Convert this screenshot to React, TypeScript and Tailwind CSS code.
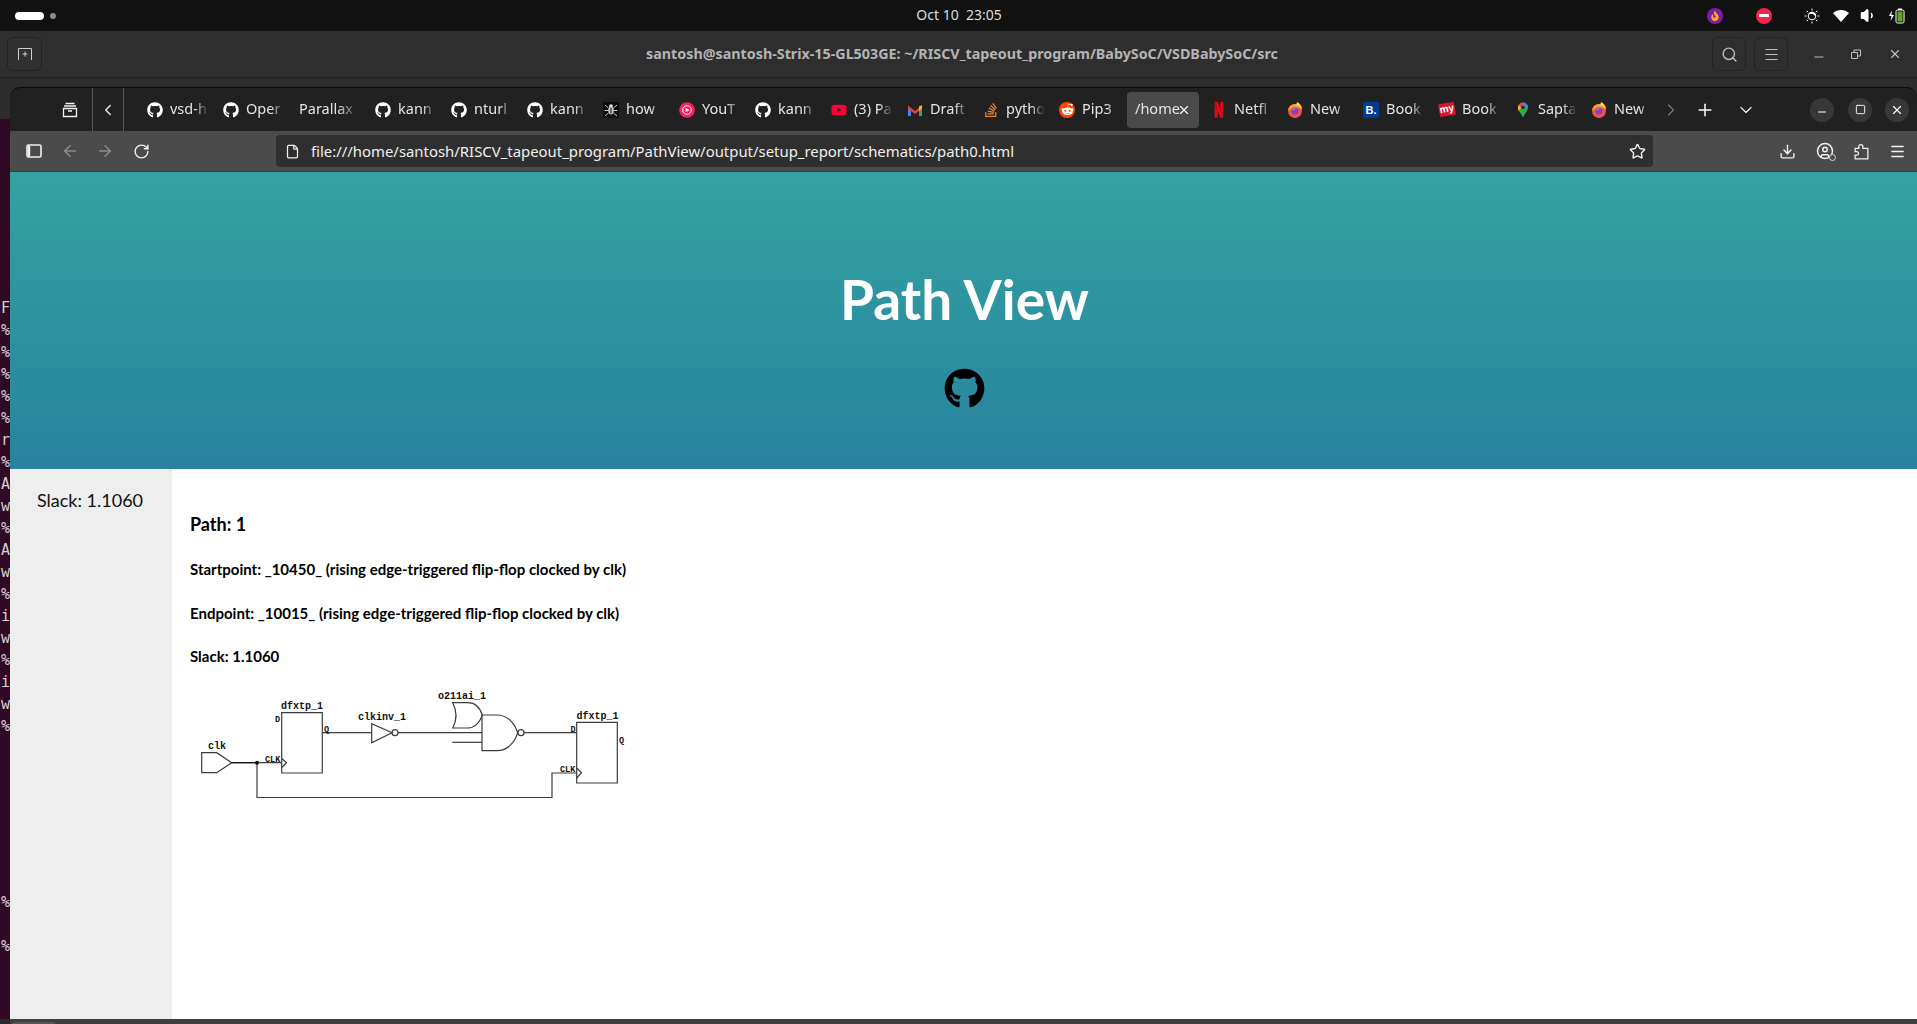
import { ArrowLeft, ArrowRight, ChevronDown, ChevronLeft, ChevronRight, CircleUser, Download, File, Menu, Minus, Plus, RotateCw, Search, Square, Star, Volume1, X } from "lucide-react";
import type { ReactNode } from "react";
import { FaFire, FaGithub, FaRedditAlien, FaStackOverflow, FaYoutube } from "react-icons/fa";
import { SiNetflix } from "react-icons/si";

const uiFont = "font-['Noto_Sans',sans-serif]";

const Firefox = () => (
  <svg viewBox="0 0 16 16" className="w-4 h-4 shrink-0">
    <circle cx="8" cy="9" r="7" fill="#f4523f" />
    <path d="M1 9a7 7 0 0 1 7-7c3.500 0 6 2.500 7 6-2-3-9-4-14 1z" fill="#ff9a2e" />
    <path d="M8.500 3c1-1 1.500-2 1.500-3 3 1.500 5 4 5 7.500C13.500 5 11 3.500 8.500 3z" fill="#ffd33d" />
    <circle cx="8" cy="9" r="3.400" fill="#7a3fd1" />
    <path d="M5 8c1-1.500 3-2 5-1.200-1.500 0-2.500.6-3 1.400z" fill="#ff9a2e" />
  </svg>
);

const Gmail = () => (
  <svg viewBox="0 0 16 16" className="w-4 h-4 shrink-0">
    <path d="M1 3.500v10.500h3V7z" fill="#4285f4" />
    <path d="M15 3.500v10.500h-3V7z" fill="#34a853" />
    <path d="M1 3.500l7 5.500 7-5.500v3L8 12 1 6.500z" fill="#ea4335" />
    <path d="M12 4.500l3-1.500v3.500L12 9z" fill="#fbbc04" />
  </svg>
);

const MapsPin = () => (
  <svg viewBox="0 0 16 16" className="w-4 h-4 shrink-0">
    <path d="M8 15.500C6 11 3 9 3 5.500a5 5 0 0 1 10 0C13 9 10 11 8 15.500z" fill="#34a853" />
    <path d="M3.600 3.200A5 5 0 0 1 8 .5v3a2 2 0 0 0-2 2z" fill="#ea4335" />
    <path d="M8 .5a5 5 0 0 1 5 5h-3a2 2 0 0 0-2-2z" fill="#4285f4" />
    <path d="M3.600 3.200L6 5.500 3.600 9C3.200 8 3 6.800 3 5.500c0-.8.2-1.600.6-2.300z" fill="#fbbc04" />
    <circle cx="8" cy="5.500" r="1.800" fill="#26282c" />
  </svg>
);

const YoutubeMusic = () => (
  <svg viewBox="0 0 16 16" className="w-4 h-4 shrink-0">
    <circle cx="8" cy="8" r="7.800" fill="#ff1f5f" />
    <circle cx="8" cy="8" r="4.300" fill="none" stroke="#fff" strokeWidth="1" />
    <path d="M6.700 5.900L10.400 8l-3.700 2.100z" fill="#fff" />
  </svg>
);

const HowIcon = () => (
  <svg viewBox="0 0 16 16" className="w-4 h-4 shrink-0">
    <rect width="16" height="16" fill="#0c0c0c" />
    <ellipse cx="8" cy="8.500" rx="2.800" ry="4" fill="#c8c8c8" />
    <circle cx="8" cy="4" r="1.800" fill="#e8e8e8" />
    <path d="M2 3l3.500 3M14 3l-3.500 3M1.500 8.500h4M14.500 8.500h-4M2 14l3.500-3M14 14l-3.500-3" stroke="#c8c8c8" strokeWidth="1" />
    <path d="M8 5.500v6" stroke="#0c0c0c" strokeWidth="1" />
  </svg>
);

const RedditIcon = () => (
  <span className="w-4 h-4 shrink-0 rounded-full bg-[#ff4500] flex items-center justify-center">
    <FaRedditAlien className="w-[13px] h-[13px] text-white" />
  </span>
);

const BookingIcon = () => (
  <span className="w-4 h-4 shrink-0 rounded-[2px] bg-[#003b95] text-white text-[11px] leading-4 font-bold text-center font-['Liberation_Sans',sans-serif]">B.</span>
);

const MyShowIcon = () => (
  <span className="w-4 h-[13px] shrink-0 rounded-[1px] bg-[#d6182d] text-white text-[10px] leading-[12px] font-bold text-center -rotate-[10deg] font-['Liberation_Sans',sans-serif]">my</span>
);

const gh = <FaGithub className="w-4 h-4 shrink-0 text-white" />;

const tabs: { title: string; icon?: ReactNode; active?: boolean }[] = [
  { title: "vsd-h", icon: gh },
  { title: "Oper", icon: gh },
  { title: "Parallax" },
  { title: "kann", icon: gh },
  { title: "nturl", icon: gh },
  { title: "kann", icon: gh },
  { title: "how", icon: <HowIcon /> },
  { title: "YouT", icon: <YoutubeMusic /> },
  { title: "kann", icon: gh },
  { title: "(3) Pa", icon: <FaYoutube className="w-4 h-4 shrink-0 text-[#ff0033]" /> },
  { title: "Draft", icon: <Gmail /> },
  { title: "pytho", icon: <FaStackOverflow className="w-4 h-4 shrink-0 text-[#f48024]" /> },
  { title: "Pip3", icon: <RedditIcon /> },
  { title: "/home", active: true },
  { title: "Netfl", icon: <SiNetflix className="w-4 h-4 shrink-0 text-[#e50914]" /> },
  { title: "New", icon: <Firefox /> },
  { title: "Book", icon: <BookingIcon /> },
  { title: "Book", icon: <MyShowIcon /> },
  { title: "Sapta", icon: <MapsPin /> },
  { title: "New", icon: <Firefox /> },
];

const terminalRows: Record<number, string> = {
  0: "F", 1: "%", 2: "%", 3: "%", 4: "%", 5: "%", 6: "r", 7: "%", 8: "A", 9: "w",
  10: "%", 11: "A", 12: "w", 13: "%", 14: "i", 15: "w", 16: "%", 17: "i", 18: "w", 19: "%",
  27: "%", 29: "%",
};

const Tab = ({ title, icon, active }: { title: string; icon?: ReactNode; active?: boolean }) => (
  <div className={`w-[72px] h-[36px] mr-[4px] shrink-0 rounded-[4px] pl-2 flex items-center gap-[7px] relative ${active ? "bg-[#4a4a4a]" : ""}`}>
    {icon}
    <span className={`text-[14.500px] text-[#e4e4e4] whitespace-nowrap overflow-hidden flex-1 pb-[2px] ${active ? "pr-[14px] [mask-image:linear-gradient(to_right,black_75%,transparent)]" : "pr-[4px] [mask-image:linear-gradient(to_right,black_60%,transparent_95%)]"}`}>{title}</span>
    {active && <X size={14} strokeWidth={2} className="absolute right-[8px] text-white" />}
  </div>
);

const TopBar = () => (
  <div className={`h-[31px] bg-[#111111] flex items-center shrink-0 ${uiFont}`}>
    <div className="flex-1 flex items-center">
      <div className="ml-[15px] w-[29px] h-[8px] rounded-full bg-white" />
      <div className="ml-[6px] w-[6px] h-[6px] rounded-full bg-[#8a8a8a]" />
    </div>
    <div className="ml-[12px] pb-[3px] text-[14px] text-[#dddddd] whitespace-pre">Oct 10  23:05</div>
    <div className="flex-1 flex items-center justify-end text-white pr-[11px]">
      <span className="w-4 h-[16px] rounded-full bg-[#7b1fa2] flex items-center justify-center mr-[33px]">
        <FaFire className="w-[10px] h-[10px] text-[#ffa62e]" />
      </span>
      <span className="w-[16px] h-[16px] rounded-full bg-[#f4254a] flex items-center justify-center mr-[32px]">
        <span className="w-[10px] h-[2.500px] bg-white" />
      </span>
      <svg viewBox="0 0 16 16" className="w-[16px] h-[16px] mr-[13px]" fill="none" stroke="#fff" strokeWidth="1">
        <circle cx="8" cy="8" r="3.800" />
        <path d="M5.300 5.300a3.800 3.800 0 0 1 6.400 2.700 6 6 0 0 0-6.400-2.700z" fill="#fff" />
        <path d="M8 .5v2M8 13.500v2M.5 8h2M13.500 8h2M2.700 2.700l1.400 1.400M11.900 11.900l1.400 1.400M2.700 13.300l1.400-1.400M11.900 4.100l1.400-1.400" />
      </svg>
      <svg viewBox="0 0 16 16" className="w-4 h-4 mr-[11px]"><path d="M0 5c4.500-4 11.500-4 16 0L8 14z" fill="#fff" /></svg>
      <Volume1 size={17} fill="#fff" className="mr-[11px]" />
      <svg viewBox="0 0 18 18" className="w-[18px] h-[18px]">
        <path d="M4 3.500L1 9h2.500L2.500 14 6 8H3.500z" fill="#fff" />
        <rect x="8" y="3" width="8" height="13" rx="1.500" fill="none" stroke="#fff" />
        <rect x="9.500" y="4.500" width="5" height="10" fill="#5fa61c" />
        <rect x="10" y="1.500" width="4" height="1.500" fill="#fff" />
      </svg>
    </div>
  </div>
);

const TitleBar = () => (
  <div className={`h-[47px] bg-[#2e2e2e] border-b border-[#1e1e1e] flex items-center shrink-0 ${uiFont}`}>
    <div className="flex-1 pl-[7px]">
      <div className="w-[35px] h-[34px] rounded-[6px] border border-[#222222] bg-[#303030] flex items-center justify-center">
        <svg viewBox="0 0 16 16" className="w-4 h-4" fill="none" stroke="#d0d0d0" strokeWidth="1"><path d="M1.500 14V2.500h13V14M8 5.500v5M5.500 8h5" /></svg>
      </div>
    </div>
    <div className="text-[14.300px] font-bold text-[#b4b4b4] whitespace-nowrap">santosh@santosh-Strix-15-GL503GE: ~/RISCV_tapeout_program/BabySoC/VSDBabySoC/src</div>
    <div className="flex-1 flex items-center justify-end">
      <div className="w-[34px] h-[34px] rounded-[6px] border border-[#222222] flex items-center justify-center mr-[8px]"><Search size={17} className="text-[#bdbdbd]" /></div>
      <div className="w-[34px] h-[34px] rounded-[6px] border border-[#222222] flex items-center justify-center mr-[24px]"><Menu size={17} strokeWidth={1.500} className="text-[#bdbdbd]" /></div>
      <Minus size={14} className="text-[#bdbdbd] mr-[24px] mt-[6px]" />
      <svg viewBox="0 0 12 12" className="w-3 h-3 mr-[26px]" fill="none" stroke="#bdbdbd"><path d="M1.500 4.500h6v6h-6zM4 4.500V2h6.500v6H7.500" /></svg>
      <X size={14} className="text-[#bdbdbd] mr-[15px]" />
    </div>
  </div>
);

const TabBar = () => (
  <div className={`h-[44px] bg-[#212121] border-t border-[#0b0b0b] rounded-t-[10px] flex items-center shrink-0 ${uiFont}`}>
    <svg viewBox="0 0 16 16" className="w-4 h-4 ml-[52px] mr-[14px] shrink-0" fill="none" stroke="#f0f0f0" strokeWidth="1.300"><path d="M3.500 1.500h9M2 4h12M1.500 6.500h13v8h-13zM6 9h4" /></svg>
    <div className="w-px h-[44px] bg-[#555555]" />
    <ChevronLeft size={18} className="text-[#e8e8e8] mx-[6px] shrink-0" />
    <div className="w-px h-[44px] bg-[#555555] mr-[15px]" />
    <div className="flex items-center">
      {tabs.map((tab, i) => <Tab key={i} {...tab} />)}
    </div>
    <ChevronRight size={20} strokeWidth={1.500} className="text-[#777777] ml-[2px] shrink-0" />
    <Plus size={20} strokeWidth={1.800} className="text-white ml-[14px] shrink-0" />
    <ChevronDown size={20} strokeWidth={1.500} className="text-[#e8e8e8] ml-[21px] shrink-0" />
    <div className="w-6 h-6 rounded-full bg-[#383838] flex items-center justify-center ml-[54px] shrink-0"><Minus size={12} className="text-white mt-1" /></div>
    <div className="w-6 h-6 rounded-full bg-[#383838] flex items-center justify-center ml-[14px] shrink-0"><Square size={11} className="text-white" /></div>
    <div className="w-6 h-6 rounded-full bg-[#383838] flex items-center justify-center ml-[13px] shrink-0"><X size={14} className="text-white" /></div>
  </div>
);

const Toolbar = () => (
  <div className={`h-[41px] bg-[#4b4b4b] border-b border-[#3a3a3a] flex items-center shrink-0 ${uiFont}`}>
    <svg viewBox="0 0 16 16" className="w-4 h-4 ml-[16px] shrink-0" fill="none" stroke="#f0f0f0" strokeWidth="1.600"><rect x="1" y="2" width="14" height="12" rx="1.500" /><path d="M3 3v10" strokeWidth="2.400" /></svg>
    <ArrowLeft size={18} className="text-[#8d8d8d] ml-[19px] shrink-0" />
    <ArrowRight size={18} className="text-[#8d8d8d] ml-[17px] shrink-0" />
    <RotateCw size={17} className="text-[#f0f0f0] ml-[19px] shrink-0" />
    <div className="w-[1377px] h-[32px] rounded-[4px] bg-[#2f2f2f] ml-[126px] flex items-center pl-[9px] shrink-0">
      <File size={15} className="text-[#f0f0f0] shrink-0" />
      <span className="ml-[11px] text-[14.900px] text-[#f0f0f0] whitespace-nowrap">file:///home/santosh/RISCV_tapeout_program/PathView/output/setup_report/schematics/path0.html</span>
      <Star size={17} className="text-[#f0f0f0] ml-auto mr-[7px] shrink-0" />
    </div>
    <Download size={17} className="text-[#f0f0f0] ml-[126px] shrink-0" />
    <div className="relative ml-[20px] shrink-0">
      <CircleUser size={18} className="text-[#f0f0f0]" />
      <span className="absolute -right-[2px] -bottom-[1px] w-[7px] h-[7px] rounded-full border border-[#d0d0d0] bg-[#4b4b4b]" />
    </div>
    <svg viewBox="0 0 16 16" className="w-[17px] h-[17px] ml-[19px] shrink-0" fill="none" stroke="#f0f0f0" strokeWidth="1.200"><path d="M2 15v-3.500h1.500a1.700 1.700 0 0 0 0-3.400H2V5h3.500V3.500a1.900 1.900 0 0 1 3.800 0V5H14v10z" /></svg>
    <Menu size={17} className="text-[#f0f0f0] ml-[19px] shrink-0" />
  </div>
);

const Schematic = () => (
  <svg viewBox="10 0 450 130" className="w-[450px] h-[130px] mt-[14px] block" fill="none" stroke="#3c3c3c" strokeWidth="1.200">
    {/* clk input */}
    <path d="M21.700 72.700H36.700L51.700 82.700 36.700 92.700H21.700Z" />
    <path d="M51.700 82.700H101.700M77 82.700V117.500H372V93H396.700" />
    <path d="M51.700 82.700H77" stroke="#111" />
    <circle cx="77" cy="82.700" r="2" fill="#111" stroke="none" />
    {/* first flop */}
    <path d="M101.700 32.700H142.300V93H101.700Z" />
    <path d="M101.700 78.500L106.500 82.700 101.700 87.500" />
    {/* inverter */}
    <path d="M142.300 52.700H191.700" />
    <path d="M191.700 43.700V62.700L212 52.700Z" />
    <circle cx="215" cy="52.700" r="3" />
    <path d="M218 52.700H302" />
    {/* o211ai */}
    <path d="M272.700 22.700H288C295 22.700 300 28 302.300 35 300 42 295 48 288 48H272.700C277 40 277 31 272.700 22.700Z" />
    <path d="M272.300 62.300H302" />
    <path d="M302 35H316.700C328 35 335 44 337.700 52.700 335 62 328 70.700 316.700 70.700H302Z" />
    <circle cx="341" cy="52.700" r="3" />
    <path d="M344 52.700H396.700" />
    {/* second flop */}
    <path d="M396.700 42.300H437.300V103H396.700Z" />
    <path d="M396.700 88L401.500 92.700 396.700 98" />
    <g className="font-['Liberation_Mono',monospace] font-bold" fill="#111" stroke="none" fontSize="10">
      <text x="28" y="69">clk</text>
      <text x="101" y="29">dfxtp_1</text>
      <text x="178" y="40">clkinv_1</text>
      <text x="258" y="19">o211ai_1</text>
      <text x="396.500" y="39">dfxtp_1</text>
      <g fontSize="8.500">
        <text x="95" y="42">D</text>
        <text x="144" y="52">Q</text>
        <text x="85" y="82">CLK</text>
        <text x="390.500" y="52">D</text>
        <text x="439" y="63">Q</text>
        <text x="380" y="92">CLK</text>
      </g>
    </g>
  </svg>
);

const PathPage = () => (
  <div className="flex-1 flex flex-col bg-white min-h-0 font-['Lato',sans-serif]">
    <div className="h-[297px] shrink-0 bg-gradient-to-b from-[#34a3a0] to-[#28829f] flex flex-col items-center pt-[95px] pl-[2px]">
      <h1 className="text-[55px] leading-[64px] font-bold text-white">Path View</h1>
      <FaGithub className="w-[41px] h-[41px] text-black mt-[37px]" />
    </div>
    <div className="flex-1 flex min-h-0">
      <div className="w-[162px] bg-[#eeeeee] pt-[20px] pr-[2px] text-center text-[18px] leading-[22px] text-[#111111]">Slack: 1.1060</div>
      <div className="flex-1 pl-[18px] pt-[44px] text-black font-bold">
        <h3 className="text-[18px] leading-[22px]">Path: 1</h3>
        <p className="text-[15px] leading-[20px] mt-[24px]">Startpoint: _10450_ (rising edge-triggered flip-flop clocked by clk)</p>
        <p className="text-[15px] leading-[20px] mt-[24px]">Endpoint: _10015_ (rising edge-triggered flip-flop clocked by clk)</p>
        <p className="text-[15px] leading-[20px] mt-[23px]">Slack: 1.1060</p>
        <Schematic />
      </div>
    </div>
  </div>
);

export default function App() {
  return (
    <div className="w-[1917px] h-[1024px] flex flex-col overflow-hidden bg-[#2c2c2c]">
      <TopBar />
      <TitleBar />
      <div className="flex-1 flex min-h-0">
        <div className="w-[10px] shrink-0 pt-[41px] flex flex-col">
          <div className="flex-1 bg-[#300a24] pt-[178px] overflow-hidden font-['DejaVu_Sans_Mono',monospace] text-[15px] leading-[22px] text-[#d8d0d4]">
            {Array.from({ length: 32 }, (_, i) => (
              <div key={i} className="h-[22px] pl-[1px] w-[10px] overflow-hidden">{terminalRows[i] ?? ""}</div>
            ))}
          </div>
        </div>
        <div className="flex-1 flex flex-col min-w-0 pt-[9px]">
          <TabBar />
          <Toolbar />
          <PathPage />
        </div>
      </div>
      <div className="h-[5px] shrink-0 flex">
        <div className="w-[10px] bg-[#2a2a2a]" />
        <div className="flex-1 bg-[#3f3f3f] pl-[2px] pt-[3px]">
          <div className="w-[43px] h-[2px] rounded-t-[3px] bg-[#555555]" />
        </div>
      </div>
    </div>
  );
}
